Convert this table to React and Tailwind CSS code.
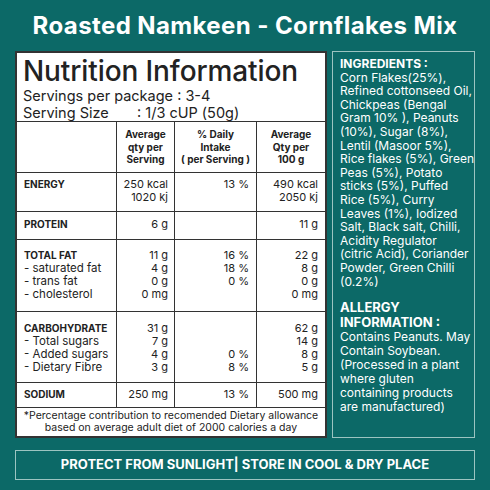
import React from 'react';

const rows = [
  {
    h: 'h-[39px]', pt: 'pt-[5px]',
    label: ['ENERGY'],
    a: ['250 kcal', '1020 kj'],
    b: ['13 %'],
    c: ['490 kcal', '2050 kj'],
  },
  {
    h: 'h-[28px]', pt: 'pt-[6px]',
    label: ['PROTEIN'],
    a: ['6 g'],
    b: [''],
    c: ['11 g'],
  },
  {
    h: 'h-[72px]', pt: 'pt-[9px]',
    label: ['TOTAL FAT', '- saturated fat', '- trans fat', '- cholesterol'],
    a: ['11 g', '4 g', '0 g', '0 mg'],
    b: ['16 %', '18 %', '0 %'],
    c: ['22 g', '8 g', '0 g', '0 mg'],
  },
  {
    h: 'h-[71px]', pt: 'pt-[10px]',
    label: ['CARBOHYDRATE', '- Total sugars', '- Added sugars', '- Dietary Fibre'],
    a: ['31 g', '7 g', '4 g', '3 g'],
    b: ['', '', '0 %', '8 %'],
    c: ['62 g', '14 g', '8 g', '5 g'],
  },
  {
    h: 'h-[25px]', pt: 'pt-[5px]',
    label: ['SODIUM'],
    a: ['250 mg'],
    b: ['13 %'],
    c: ['500 mg'],
  },
];

const ingredients = [
  'Corn Flakes(25%),',
  'Refined cottonseed Oil,',
  'Chickpeas (Bengal',
  'Gram 10% ), Peanuts',
  '(10%), Sugar (8%),',
  'Lentil (Masoor 5%),',
  'Rice flakes (5%), Green',
  'Peas (5%), Potato',
  'sticks (5%), Puffed',
  'Rice (5%), Curry',
  'Leaves (1%), Iodized',
  'Salt, Black salt, Chilli,',
  'Acidity Regulator',
  '(citric Acid), Coriander',
  'Powder, Green Chilli',
  '(0.2%)',
];

const allergy = [
  'Contains Peanuts. May',
  'Contain Soybean.',
  '(Processed in a plant',
  'where gluten',
  'containing products',
  'are manufactured)',
];

const Col = ({ items, pr = 'pr-[6px]' }) => (
  <div className={`text-right ${pr} text-[11px] leading-[13px]`}>
    {items.map((t, i) => (
      <div key={i} className="h-[13px]">{t}</div>
    ))}
  </div>
);

export default function App() {
  return (
    <div
      className="w-[490px] h-[490px] bg-[#0c6967] flex flex-col text-[#222]"
      style={{ fontFamily: 'Inter, "Noto Sans", sans-serif' }}
    >
      <div className="h-[51px] flex items-center justify-center text-white font-bold text-[24px] tracking-[0.4px] pt-[1px]">
        Roasted Namkeen - Cornflakes Mix
      </div>

      <div className="flex gap-[5px] px-[15px] h-[387px]">
        <div className="w-[312px] bg-white border-2 border-[#333] flex flex-col">
          <div className="h-[69px] border-b border-[#333] pl-[6px] pt-[3px]">
            <div className="text-[28px] leading-[31px] font-medium tracking-[-0.1px]">Nutrition Information</div>
            <div className="text-[14.5px] leading-[17px]">Servings per package : 3-4</div>
            <div className="text-[14.5px] leading-[17px] flex">
              <span className="w-[114px]">Serving Size</span>
              <span>: 1/3 cUP (50g)</span>
            </div>
          </div>

          <div className="grid grid-cols-[100px_58px_82px_68px] h-[51px] border-b border-[#333] text-[10px] leading-[12.5px] font-bold text-center">
            <div className="border-r border-[#333]" />
            <div className="border-r border-[#333] flex items-center justify-center">
              <div>Average<br />qty per<br />Serving</div>
            </div>
            <div className="border-r border-[#333] flex items-center justify-center">
              <div>% Daily<br />Intake<br />( per Serving )</div>
            </div>
            <div className="flex items-center justify-center">
              <div>Average<br />Qty per<br />100 g</div>
            </div>
          </div>

          {rows.map((r, i) => (
            <div key={i} className={`grid grid-cols-[100px_58px_82px_68px] ${r.h} border-b border-[#333]`}>
              <div className={`border-r border-[#333] pl-[7px] ${r.pt} text-[11.5px] leading-[13px]`}>
                {r.label.map((t, j) => (
                  <div key={j} className={j === 0 ? 'h-[13px] text-[10px] font-bold' : 'h-[13px]'}>{t}</div>
                ))}
              </div>
              <div className={`${r.pt} border-r border-[#333]`}><Col items={r.a} /></div>
              <div className={`${r.pt} border-r border-[#333]`}><Col items={r.b} pr="pr-[7px]" /></div>
              <div className={r.pt}><Col items={r.c} pr="pr-[7px]" /></div>
            </div>
          ))}

          <div className="flex-1 flex flex-col items-center justify-center text-[10.5px] leading-[12px] text-center">
            <div>*Percentage contribution to recomended Dietary allowance</div>
            <div>based on average adult diet of 2000 calories a day</div>
          </div>
        </div>

        <div className="flex-1 border border-[#9cc4c1] text-white pl-[7px] pt-[5px]">
          <div className="text-[12px] leading-[13.6px] font-bold">INGREDIENTS :</div>
          {ingredients.map((t, i) => (
            <div key={i} className="text-[12px] leading-[13.6px] whitespace-nowrap">{t}</div>
          ))}
          <div className="mt-[12px] text-[13px] leading-[15px] font-bold">ALLERGY</div>
          <div className="text-[13px] leading-[15px] font-bold">INFORMATION :</div>
          {allergy.map((t, i) => (
            <div key={i} className="text-[12px] leading-[14px] whitespace-nowrap">{t}</div>
          ))}
        </div>
      </div>

      <div className="mt-[12px] mx-[15px] h-[30px] border border-[#9cc4c1] flex items-center justify-center text-white font-bold text-[13px]">
        PROTECT FROM SUNLIGHT| STORE IN COOL &amp; DRY PLACE
      </div>
    </div>
  );
}
